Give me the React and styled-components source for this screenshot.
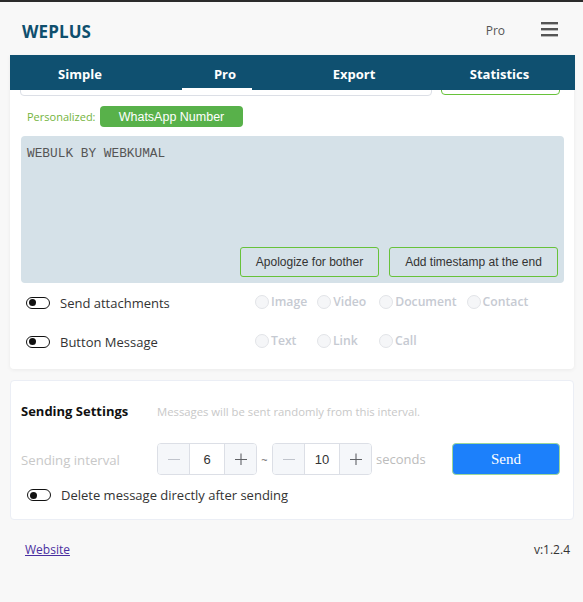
import React from "react";
import styled, { createGlobalStyle } from "styled-components";

const GlobalStyle = createGlobalStyle`
  html, body { margin: 0; padding: 0; }
  body {
    background: #f8f8f8;
    font-family: "Open Sans", "Noto Sans", Arial, sans-serif;
    color: #333;
  }
  * { box-sizing: border-box; }
`;

const TopStrip = styled.div`
  height: 2px;
  background: #2b2b2b;
`;

const Page = styled.div`
  padding: 0 8px 0 10px;
`;

const Header = styled.header`
  height: 53px;
  display: flex;
  align-items: center;
  justify-content: space-between;
  padding: 0 17px 0 12px;
`;

const Logo = styled.div`
  font-size: 17px;
  font-weight: 700;
  color: #0f4f6e;
  letter-spacing: 0.1px;
  margin-top: 6px;
`;

const HeaderRight = styled.div`
  display: flex;
  align-items: center;
  gap: 36px;
`;

const PlanLabel = styled.span`
  font-size: 12px;
  color: #555;
  margin-top: 4px;
`;

const TabBar = styled.nav`
  position: relative;
  z-index: 2;
  height: 35px;
  background: #0f5070;
  display: grid;
  grid-template-columns: 140px 150px 108px 1fr;
  align-items: stretch;
`;

const Tab = styled.div`
  position: relative;
  display: flex;
  align-items: center;
  justify-content: center;
  padding-top: 3px;
  padding-left: ${(p) => p.$shift || 0}px;
  color: #fff;
  font-size: 13px;
  font-weight: 700;
  &::after {
    content: "";
    display: ${(p) => (p.$active ? "block" : "none")};
    position: absolute;
    left: 32px;
    bottom: 0;
    width: 70px;
    height: 2px;
    background: #fff;
  }
`;

const Card = styled.section`
  position: relative;
  z-index: 1;
  background: #fff;
  border-radius: 0 0 4px 4px;
  box-shadow: 0 1px 4px rgba(0, 0, 0, 0.06);
  margin-right: 1px;
`;

const MainCard = styled(Card)`
  margin-top: -35px;
  padding: 9px 10px 8px 10px;
`;

const TopRow = styled.div`
  display: flex;
  gap: 9px;
`;

const HiddenInput = styled.div`
  width: 412px;
  height: 32px;
  border: 1px solid #dcdfe6;
  border-radius: 4px;
  background: #fff;
`;

const HiddenButton = styled.div`
  width: 119px;
  height: 31px;
  border: 1.5px solid #67c23a;
  border-radius: 4px;
`;

const PersonalRow = styled.div`
  margin-top: 10px;
  display: flex;
  align-items: center;
  padding-left: 7px;
  gap: 5px;
  height: 21px;
`;

const PersonalLabel = styled.span`
  font-size: 11px;
  color: #74b43d;
  width: 68px;
`;

const TagButton = styled.button`
  width: 143px;
  height: 21px;
  border: none;
  border-radius: 4px;
  background: #58b14a;
  color: #fff;
  font-family: "Liberation Sans", Arial, sans-serif;
  font-size: 12.5px;
  padding: 0;
`;

const MessageBox = styled.div`
  margin: 9px 0 0 1px;
  height: 147px;
  background: #d5e1e8;
  border-radius: 4px;
  padding: 10px 6px 6px 6px;
  display: flex;
  flex-direction: column;
  justify-content: space-between;
`;

const MessageText = styled.div`
  font-family: "Liberation Mono", "DejaVu Sans Mono", monospace;
  font-size: 12.8px;
  color: #555;
`;

const BoxActions = styled.div`
  display: flex;
  justify-content: flex-end;
  gap: 10px;
`;

const OutlineButton = styled.button`
  height: 30px;
  width: ${(p) => p.$w}px;
  border: 1px solid #67c23a;
  border-radius: 3px;
  background: transparent;
  color: #333;
  font-family: "Liberation Sans", Arial, sans-serif;
  font-size: 12px;
  padding: 0;
`;

const OptionRow = styled.div`
  height: 39px;
  display: grid;
  grid-template-columns: 229px 1fr;
  align-items: center;
  padding-left: 6px;
`;

const SwitchLabel = styled.label`
  display: flex;
  align-items: center;
  gap: 10px;
  font-size: 13px;
  color: #333;
`;

const Switch = styled.span`
  width: 24px;
  height: 12px;
  border: 1.5px solid #111;
  border-radius: 7px;
  display: flex;
  align-items: center;
  padding-left: 1.5px;
  &::before {
    content: "";
    width: 7px;
    height: 7px;
    border-radius: 50%;
    background: #111;
  }
`;

const RadioGroup = styled.div`
  display: flex;
  align-items: center;
  margin-top: -2px;
`;

const RadioItem = styled.span`
  display: flex;
  align-items: center;
  gap: 2px;
  min-width: 52px;
  margin-right: 10px;
  font-size: 12.2px;
  font-weight: 600;
  color: #c6cad2;
`;

const RadioDot = styled.span`
  width: 14px;
  height: 14px;
  border-radius: 50%;
  border: 1px solid #e2e4e8;
  background: #f5f6f8;
  flex-shrink: 0;
`;

const SettingsCard = styled(Card)`
  margin-top: 11px;
  height: 140px;
  border: 1px solid #ebeef5;
  border-radius: 4px;
  box-shadow: none;
  padding: 20px 10px 0 10px;
`;

const TitleRow = styled.div`
  height: 20px;
  display: flex;
  align-items: center;
`;

const Title = styled.h3`
  margin: 0;
  width: 136px;
  font-size: 13px;
  font-weight: 700;
  color: #111;
`;

const Hint = styled.span`
  font-size: 11.3px;
  color: #c8c8c8;
`;

const IntervalRow = styled.div`
  margin-top: 22px;
  height: 32px;
  display: flex;
  align-items: center;
`;

const FieldLabel = styled.span`
  width: 136px;
  font-size: 13.2px;
  color: #c8c8c8;
  margin-top: 2px;
`;

const Stepper = styled.div`
  display: flex;
  height: 32px;
  width: 100px;
  border: 1px solid #dcdfe6;
  border-radius: 4px;
  overflow: hidden;
`;

const StepBtn = styled.span`
  width: 32px;
  display: flex;
  align-items: center;
  justify-content: center;
  background: #f5f7fa;
  border-${(p) => p.$side}: 1px solid #dcdfe6;
`;

const StepValue = styled.span`
  flex: 1;
  display: flex;
  align-items: center;
  justify-content: center;
  font-family: "Liberation Sans", Arial, sans-serif;
  font-size: 13px;
  color: #333;
`;

const Tilde = styled.span`
  width: 15px;
  text-align: center;
  font-size: 11px;
  color: #666;
`;

const Unit = styled.span`
  margin-left: 4px;
  font-size: 13px;
  color: #bcbcbc;
`;

const SendButton = styled.button`
  margin-left: auto;
  margin-right: 3px;
  width: 108px;
  height: 32px;
  border: 1px solid #9bd69a;
  border-radius: 4px;
  background: #1c80fb;
  color: #fff;
  font-family: "Liberation Serif", "Times New Roman", serif;
  font-size: 15px;
`;

const DeleteRow = styled.div`
  margin-top: 10px;
  height: 20px;
  display: flex;
  align-items: center;
  padding-left: 6px;
`;

const Footer = styled.footer`
  display: flex;
  justify-content: space-between;
  align-items: center;
  padding: 21px 5px 0 15px;
  font-size: 12px;
`;

const SiteLink = styled.a`
  color: #4a2fa0;
  text-decoration: underline;
`;

const Version = styled.span`
  color: #333;
`;

const MenuIcon = () => (
  <svg width="17" height="16" viewBox="0 0 17 16">
    <rect x="0" y="1" width="17" height="2.4" fill="#555" />
    <rect x="0" y="7" width="17" height="2.4" fill="#555" />
    <rect x="0" y="13" width="17" height="2.4" fill="#555" />
  </svg>
);

const MinusIcon = () => (
  <svg width="12" height="12" viewBox="0 0 12 12">
    <line x1="0" y1="6.5" x2="12" y2="6.5" stroke="#c0c4cc" strokeWidth="1" />
  </svg>
);

const PlusIcon = () => (
  <svg width="12" height="12" viewBox="0 0 12 12">
    <line x1="0" y1="6.5" x2="12" y2="6.5" stroke="#606266" strokeWidth="1.1" />
    <line x1="6" y1="0.5" x2="6" y2="12" stroke="#606266" strokeWidth="1.1" />
  </svg>
);

const Radio = ({ label }) => (
  <RadioItem>
    <RadioDot />
    {label}
  </RadioItem>
);

const NumberStepper = ({ value }) => (
  <Stepper>
    <StepBtn $side="right">
      <MinusIcon />
    </StepBtn>
    <StepValue>{value}</StepValue>
    <StepBtn $side="left">
      <PlusIcon />
    </StepBtn>
  </Stepper>
);

export default function App() {
  return (
    <>
      <GlobalStyle />
      <TopStrip />
      <Page>
        <Header>
          <Logo>WEPLUS</Logo>
          <HeaderRight>
            <PlanLabel>Pro</PlanLabel>
            <MenuIcon />
          </HeaderRight>
        </Header>
        <TabBar>
          <Tab>Simple</Tab>
          <Tab $active>Pro</Tab>
          <Tab>Export</Tab>
          <Tab $shift={16}>Statistics</Tab>
        </TabBar>
        <MainCard>
          <TopRow>
            <HiddenInput />
            <HiddenButton />
          </TopRow>
          <PersonalRow>
            <PersonalLabel>Personalized:</PersonalLabel>
            <TagButton>WhatsApp Number</TagButton>
          </PersonalRow>
          <MessageBox>
            <MessageText>WEBULK BY WEBKUMAL</MessageText>
            <BoxActions>
              <OutlineButton $w={139}>Apologize for bother</OutlineButton>
              <OutlineButton $w={169}>Add timestamp at the end</OutlineButton>
            </BoxActions>
          </MessageBox>
          <OptionRow>
            <SwitchLabel>
              <Switch />
              Send attachments
            </SwitchLabel>
            <RadioGroup>
              <Radio label="Image" />
              <Radio label="Video" />
              <Radio label="Document" />
              <Radio label="Contact" />
            </RadioGroup>
          </OptionRow>
          <OptionRow>
            <SwitchLabel>
              <Switch />
              Button Message
            </SwitchLabel>
            <RadioGroup>
              <Radio label="Text" />
              <Radio label="Link" />
              <Radio label="Call" />
            </RadioGroup>
          </OptionRow>
        </MainCard>
        <SettingsCard>
          <TitleRow>
            <Title>Sending Settings</Title>
            <Hint>Messages will be sent randomly from this interval.</Hint>
          </TitleRow>
          <IntervalRow>
            <FieldLabel>Sending interval</FieldLabel>
            <NumberStepper value="6" />
            <Tilde>~</Tilde>
            <NumberStepper value="10" />
            <Unit>seconds</Unit>
            <SendButton>Send</SendButton>
          </IntervalRow>
          <DeleteRow>
            <SwitchLabel>
              <Switch />
              Delete message directly after sending
            </SwitchLabel>
          </DeleteRow>
        </SettingsCard>
        <Footer>
          <SiteLink href="#">Website</SiteLink>
          <Version>v:1.2.4</Version>
        </Footer>
      </Page>
    </>
  );
}
